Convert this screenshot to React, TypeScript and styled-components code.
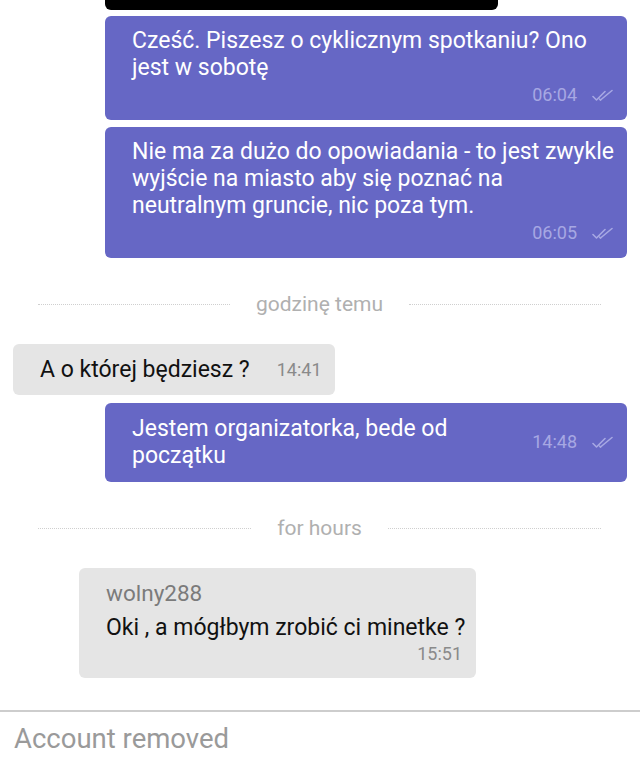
import React from "react";
import styled, { createGlobalStyle } from "styled-components";

const Global = createGlobalStyle`
  html, body { margin: 0; padding: 0; background: #ffffff; }
  body { font-family: Roboto, "Noto Sans", Arial, sans-serif; }
`;

const Screen = styled.div`
  width: 640px;
  height: 764px;
  overflow: hidden;
  display: flex;
  flex-direction: column;
  background: #ffffff;
`;

const Thread = styled.div`
  flex: 1;
  display: flex;
  flex-direction: column;
  overflow: hidden;
`;

const CutOff = styled.div`
  margin-left: 105px;
  width: 393px;
  height: 10px;
  background: #000;
  border-radius: 0 0 6px 6px;
`;

const Outgoing = styled.div<{ $gap: number; $inline?: boolean }>`
  margin: ${(p) => p.$gap}px 13px 0 105px;
  background: #6667c5;
  border-radius: 6px;
  padding: ${(p) => (p.$inline ? "12px 14px 13px 27px" : "11px 6px 13px 27px")};
  display: flex;
  flex-direction: ${(p) => (p.$inline ? "row" : "column")};
  align-items: ${(p) => (p.$inline ? "center" : "stretch")};
  gap: ${(p) => (p.$inline ? "20px" : "0")};
`;

const OutText = styled.div`
  color: #ffffff;
  font-size: 23px;
  line-height: 27px;
  flex: 1;
`;

const Meta = styled.div<{ $inline?: boolean }>`
  display: flex;
  align-items: center;
  justify-content: flex-end;
  gap: 15px;
  margin-top: ${(p) => (p.$inline ? "0" : "2px")};
  padding-right: ${(p) => (p.$inline ? "0" : "8px")};
  color: #a7a8e3;
  font-size: 18px;
  line-height: 24px;
`;

const Separator = styled.div<{ $top: number }>`
  margin: ${(p) => p.$top}px 39px 0 38px;
  display: flex;
  align-items: center;
  gap: 26px;
  color: #b0b0b0;
  font-size: 21px;
  line-height: 24px;
`;

const Dots = styled.div`
  flex: 1;
  border-top: 1px dotted #cfcfcf;
`;

const Incoming = styled.div<{ $gap: number; $left: number }>`
  align-self: flex-start;
  margin: ${(p) => p.$gap}px 0 0 ${(p) => p.$left}px;
  background: #e5e5e5;
  border-radius: 6px;
`;

const InlineIncoming = styled(Incoming)`
  display: flex;
  align-items: center;
  gap: 27px;
  padding: 12px 13px 12px 27px;
`;

const BlockIncoming = styled(Incoming)`
  width: 397px;
  box-sizing: border-box;
  padding: 12px 14px 12px 27px;
  display: flex;
  flex-direction: column;
`;

const InText = styled.div<{ $wide?: boolean }>`
  color: #111;
  font-size: 23px;
  line-height: 27px;
  margin-right: ${(p) => (p.$wide ? "-8px" : "0")};
`;

const Sender = styled.div`
  color: #7b7b7b;
  font-size: 22.5px;
  line-height: 27px;
  margin-bottom: 7px;
`;

const InTime = styled.div<{ $alignEnd?: boolean }>`
  color: #8a8a8a;
  font-size: 18px;
  line-height: 24px;
  align-self: ${(p) => (p.$alignEnd ? "flex-end" : "auto")};
  margin-top: ${(p) => (p.$alignEnd ? "1px" : "0")};
`;

const Composer = styled.div`
  border-top: 2px solid #cdcdcd;
  height: 52px;
  display: flex;
  align-items: center;
  padding-left: 14px;
  color: #9a9a9a;
  font-size: 27.5px;
`;

const Ticks = () => (
  <svg width="21" height="13" viewBox="0 0 21 13" fill="none" stroke="#a7a8e3" strokeWidth="1.6" strokeLinecap="round" strokeLinejoin="round">
    <path d="M1 7.5 L4.5 11 L13 2.5" />
    <path d="M8.5 11 L20 1.5" />
    <path d="M7.5 10 L8.5 11" />
  </svg>
);

export default function App() {
  return (
    <Screen>
      <Global />
      <Thread>
        <CutOff />
        <Outgoing $gap={6}>
          <OutText>Cześć. Piszesz o cyklicznym spotkaniu? Ono jest w sobotę</OutText>
          <Meta>
            <span>06:04</span>
            <Ticks />
          </Meta>
        </Outgoing>
        <Outgoing $gap={7}>
          <OutText>Nie ma za dużo do opowiadania - to jest zwykle wyjście na miasto aby się poznać na neutralnym gruncie, nic poza tym.</OutText>
          <Meta>
            <span>06:05</span>
            <Ticks />
          </Meta>
        </Outgoing>
        <Separator $top={34}>
          <Dots />
          <span>godzinę temu</span>
          <Dots />
        </Separator>
        <InlineIncoming $gap={28} $left={13}>
          <InText>A o której będziesz ?</InText>
          <InTime>14:41</InTime>
        </InlineIncoming>
        <Outgoing $gap={8} $inline>
          <OutText>Jestem organizatorka, bede od początku</OutText>
          <Meta $inline>
            <span>14:48</span>
            <Ticks />
          </Meta>
        </Outgoing>
        <Separator $top={34}>
          <Dots />
          <span>for hours</span>
          <Dots />
        </Separator>
        <BlockIncoming $gap={28} $left={79}>
          <Sender>wolny288</Sender>
          <InText $wide>Oki , a mógłbym zrobić ci minetke ?</InText>
          <InTime $alignEnd>15:51</InTime>
        </BlockIncoming>
      </Thread>
      <Composer>Account removed</Composer>
    </Screen>
  );
}
